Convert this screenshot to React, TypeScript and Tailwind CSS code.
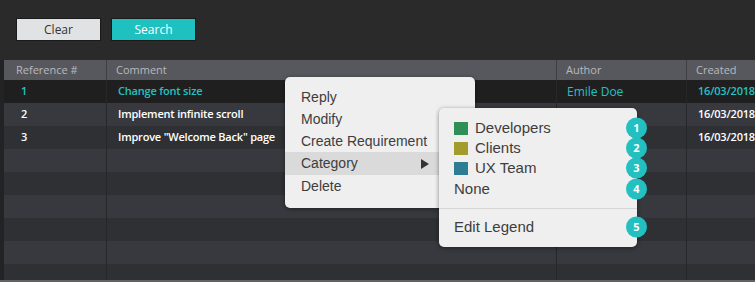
import React from "react";

const rows = [
  { ref: "1", comment: "Change font size", author: "Emile Doe", created: "16/03/2018", selected: true },
  { ref: "2", comment: "Implement infinite scroll", author: "", created: "16/03/2018" },
  { ref: "3", comment: 'Improve "Welcome Back" page', author: "", created: "16/03/2018" },
  { ref: "", comment: "", author: "", created: "" },
  { ref: "", comment: "", author: "", created: "" },
  { ref: "", comment: "", author: "", created: "" },
  { ref: "", comment: "", author: "", created: "" },
  { ref: "", comment: "", author: "", created: "" },
  { ref: "", comment: "", author: "", created: "" },
];

const categories = [
  { label: "Developers", color: "bg-[#2f8f57]", n: "1" },
  { label: "Clients", color: "bg-[#a39b2c]", n: "2" },
  { label: "UX Team", color: "bg-[#2f7d95]", n: "3" },
];

const Badge = ({ n }: { n: string }) => (
  <span className="absolute right-[-10px] top-1/2 -translate-y-1/2 flex items-center justify-center w-[21px] h-[21px] rounded-full bg-[#22c0c0] text-white text-[11px] font-bold font-['Open_Sans',sans-serif]">
    {n}
  </span>
);

const App = () => {
  return (
    <div className="relative w-[755px] h-[282px] overflow-hidden bg-[#2a2a2b] font-['Open_Sans',sans-serif]">
      {/* Buttons */}
      <div className="flex gap-[10px] pt-[18px] pl-[16px]">
        <button className="w-[85px] h-[23px] bg-[#e1e2e4] border border-[#1a1a1a] text-[12px] text-[#333]">
          Clear
        </button>
        <button className="w-[85px] h-[23px] bg-[#1fc0c0] border border-[#1a1a1a] text-[12px] text-white">
          Search
        </button>
      </div>

      {/* Table */}
      <div className="mt-[19px] h-[220px] overflow-hidden border-l-[4px] border-[#232325]">
        <div className="grid grid-cols-[103px_450px_130px_1fr] h-[20px] bg-[#57585d] text-[11px] text-[#b8b9bd]">
          <div className="pl-[12px] flex items-center border-r border-[#3e3f43]">Reference #</div>
          <div className="pl-[9px] flex items-center border-r border-[#3e3f43]">Comment</div>
          <div className="pl-[9px] flex items-center border-r border-[#3e3f43]">Author</div>
          <div className="pl-[9px] flex items-center">Created</div>
        </div>
        {rows.map((r, i) => (
          <div
            key={i}
            className={`grid grid-cols-[103px_450px_130px_1fr] h-[23px] text-[11px] font-semibold tracking-[-0.2px] ${
              r.selected
                ? "bg-[#1f1f20] text-[#25c2c2]"
                : i % 2 === 1
                ? "bg-[#38393e] text-white"
                : "bg-[#2f3034] text-white"
            }`}
          >
            <div className="pl-[17px] flex items-center border-r border-[#26272a]">{r.ref}</div>
            <div className="pl-[11px] flex items-center border-r border-[#26272a]">{r.comment}</div>
            <div className="pl-[10px] flex items-center border-r border-[#26272a] font-normal tracking-normal text-[12px]">{r.author}</div>
            <div className="pl-[11px] flex items-center whitespace-nowrap">{r.created}</div>
          </div>
        ))}
      </div>
      <div className="h-[2px] bg-[#606166]" />

      {/* Context menu */}
      <div className="absolute left-[285px] top-[77px] w-[190px] pt-[9px] pb-[11px] bg-[#efefef] rounded-[5px] shadow-[0_1px_4px_rgba(0,0,0,0.45)] font-['Liberation_Sans',Arial,sans-serif] text-[14px] text-[#3d3d3d]">
        {["Reply", "Modify", "Create Requirement"].map((t) => (
          <div key={t} className="h-[22px] flex items-center pl-[16px]">
            {t}
          </div>
        ))}
        <div className="h-[23px] flex items-center justify-between pl-[16px] pr-[46px] bg-[#dadada]">
          <span>Category</span>
          <svg width="8" height="10" viewBox="0 0 8 10">
            <path d="M0 0 L8 5 L0 10 Z" fill="#333" />
          </svg>
        </div>
        <div className="h-[22px] flex items-center pl-[16px]">Delete</div>
      </div>

      {/* Submenu */}
      <div className="absolute left-[439px] top-[108px] w-[198px] pt-[10px] pb-[10px] bg-[#efefef] rounded-[5px] shadow-[0_1px_4px_rgba(0,0,0,0.45)] font-['Liberation_Sans',Arial,sans-serif] text-[15px] text-[#3d3d3d]">
        {categories.map((c) => (
          <div key={c.label} className="relative h-[20px] flex items-center gap-[7px] pl-[15px]">
            <span className={`w-[14px] h-[13px] ${c.color}`} />
            <span>{c.label}</span>
            <Badge n={c.n} />
          </div>
        ))}
        <div className="relative h-[22px] flex items-center pl-[15px]">
          None
          <Badge n="4" />
        </div>
        <div className="mt-[8px] border-t border-[#d6d6d6]" />
        <div className="relative mt-[8px] h-[20px] flex items-center pl-[15px]">
          Edit Legend
          <Badge n="5" />
        </div>
      </div>
    </div>
  );
};

export default App;
